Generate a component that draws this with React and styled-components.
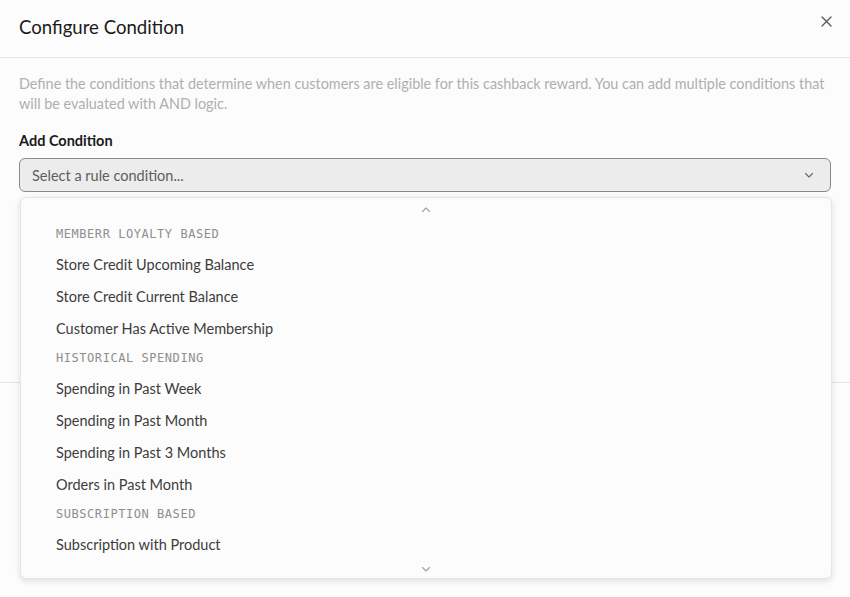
import React, { useState } from "react";
import styled, { createGlobalStyle } from "styled-components";

const GlobalStyle = createGlobalStyle`
  html, body {
    margin: 0;
    padding: 0;
    background: #fcfcfc;
  }
  body {
    font-family: "Lato", "Noto Sans", sans-serif;
    color: #1c1c1c;
  }
`;

const Dialog = styled.div`
  position: relative;
  width: 850px;
  min-height: 597px;
  display: flex;
  flex-direction: column;
  background: #fcfcfc;
`;

const Header = styled.div`
  height: 58px;
  box-sizing: border-box;
  display: flex;
  align-items: center;
  justify-content: space-between;
  padding: 0 18px 4px 19px;
  border-bottom: 1px solid #e3e3e3;
`;

const Title = styled.h2`
  margin: 0;
  font-size: 18.6px;
  font-weight: 400;
  color: #1a1a1a;
`;

const CloseButton = styled.button`
  border: none;
  background: transparent;
  padding: 0;
  width: 12px;
  height: 12px;
  margin-top: -10px;
  display: flex;
  align-items: center;
  justify-content: center;
  color: #555;
  cursor: pointer;
`;

const Body = styled.div`
  position: relative;
  padding: 16px 19px 0;
  height: 325px;
  box-sizing: border-box;
  border-bottom: 1px solid #e3e3e3;
`;

const Description = styled.p`
  margin: 0;
  font-size: 14.4px;
  line-height: 20px;
  color: #afafaf;
`;

const FieldLabel = styled.div`
  margin-top: 17px;
  font-size: 14.5px;
  font-weight: 700;
  line-height: 20px;
  color: #1a1a1a;
`;

const SelectTrigger = styled.button`
  margin-top: 7px;
  width: 100%;
  height: 34px;
  box-sizing: border-box;
  display: flex;
  align-items: center;
  justify-content: space-between;
  padding: 0 16px 0 12px;
  border: 1px solid #8a8a8a;
  border-radius: 6px;
  background: #ececec;
  font-family: inherit;
  font-size: 14.5px;
  color: #5e5e5e;
  cursor: pointer;
`;

const Menu = styled.div`
  position: absolute;
  top: 197px;
  left: 20px;
  width: 812px;
  height: 382px;
  box-sizing: border-box;
  display: flex;
  flex-direction: column;
  padding-top: 1px;
  border: 1px solid #e4e4e4;
  border-radius: 6px;
  background: #fcfcfc;
  box-shadow: 0 2px 6px rgba(0, 0, 0, 0.12);
  z-index: 10;
`;

const ScrollArrow = styled.div`
  height: ${(p) => p.$h}px;
  display: flex;
  align-items: center;
  justify-content: center;
  color: #a0a0a0;
`;

const GroupLabel = styled.div`
  height: 28px;
  display: flex;
  align-items: center;
  padding-left: 35px;
  font-family: "DejaVu Sans Mono", "Liberation Mono", monospace;
  font-size: 12px;
  letter-spacing: 0.55px;
  color: #8e8e8e;
`;

const Option = styled.div`
  height: 32px;
  display: flex;
  align-items: center;
  padding-left: 35px;
  font-size: 14.5px;
  color: #3c3c3c;
  cursor: pointer;
`;

const Footer = styled.div`
  flex: 1;
`;

const groups = [
  {
    label: "MEMBERR LOYALTY BASED",
    options: [
      "Store Credit Upcoming Balance",
      "Store Credit Current Balance",
      "Customer Has Active Membership",
    ],
  },
  {
    label: "HISTORICAL SPENDING",
    options: [
      "Spending in Past Week",
      "Spending in Past Month",
      "Spending in Past 3 Months",
      "Orders in Past Month",
    ],
  },
  {
    label: "SUBSCRIPTION BASED",
    options: ["Subscription with Product"],
  },
];

const Chevron = ({ up, size = 10 }) => (
  <svg width={size} height={size} viewBox="0 0 10 10" fill="none">
    <path
      d={up ? "M1.5 6.5 L5 3 L8.5 6.5" : "M1.5 3.5 L5 7 L8.5 3.5"}
      stroke="currentColor"
      strokeWidth="1.1"
      strokeLinecap="round"
      strokeLinejoin="round"
    />
  </svg>
);

const App = () => {
  const [open] = useState(true);

  return (
    <>
      <GlobalStyle />
      <Dialog>
        <Header>
          <Title>Configure Condition</Title>
          <CloseButton aria-label="Close">
            <svg width="11" height="11" viewBox="0 0 11 11">
              <path d="M1 1 L10 10 M10 1 L1 10" stroke="currentColor" strokeWidth="1.3" strokeLinecap="round" />
            </svg>
          </CloseButton>
        </Header>
        <Body>
          <Description>
            Define the conditions that determine when customers are eligible for this cashback reward. You can add
            multiple conditions that will be evaluated with AND logic.
          </Description>
          <FieldLabel>Add Condition</FieldLabel>
          <SelectTrigger>
            <span>Select a rule condition...</span>
            <span style={{ color: "#666", display: "flex" }}>
              <Chevron />
            </span>
          </SelectTrigger>
        </Body>
        <Footer />
        {open && (
          <Menu>
            <ScrollArrow $h={21}>
              <Chevron up />
            </ScrollArrow>
            {groups.map((g) => (
              <React.Fragment key={g.label}>
                <GroupLabel>{g.label}</GroupLabel>
                {g.options.map((o) => (
                  <Option key={o}>{o}</Option>
                ))}
              </React.Fragment>
            ))}
            <ScrollArrow $h={18}>
              <Chevron />
            </ScrollArrow>
          </Menu>
        )}
      </Dialog>
    </>
  );
};

export default App;
